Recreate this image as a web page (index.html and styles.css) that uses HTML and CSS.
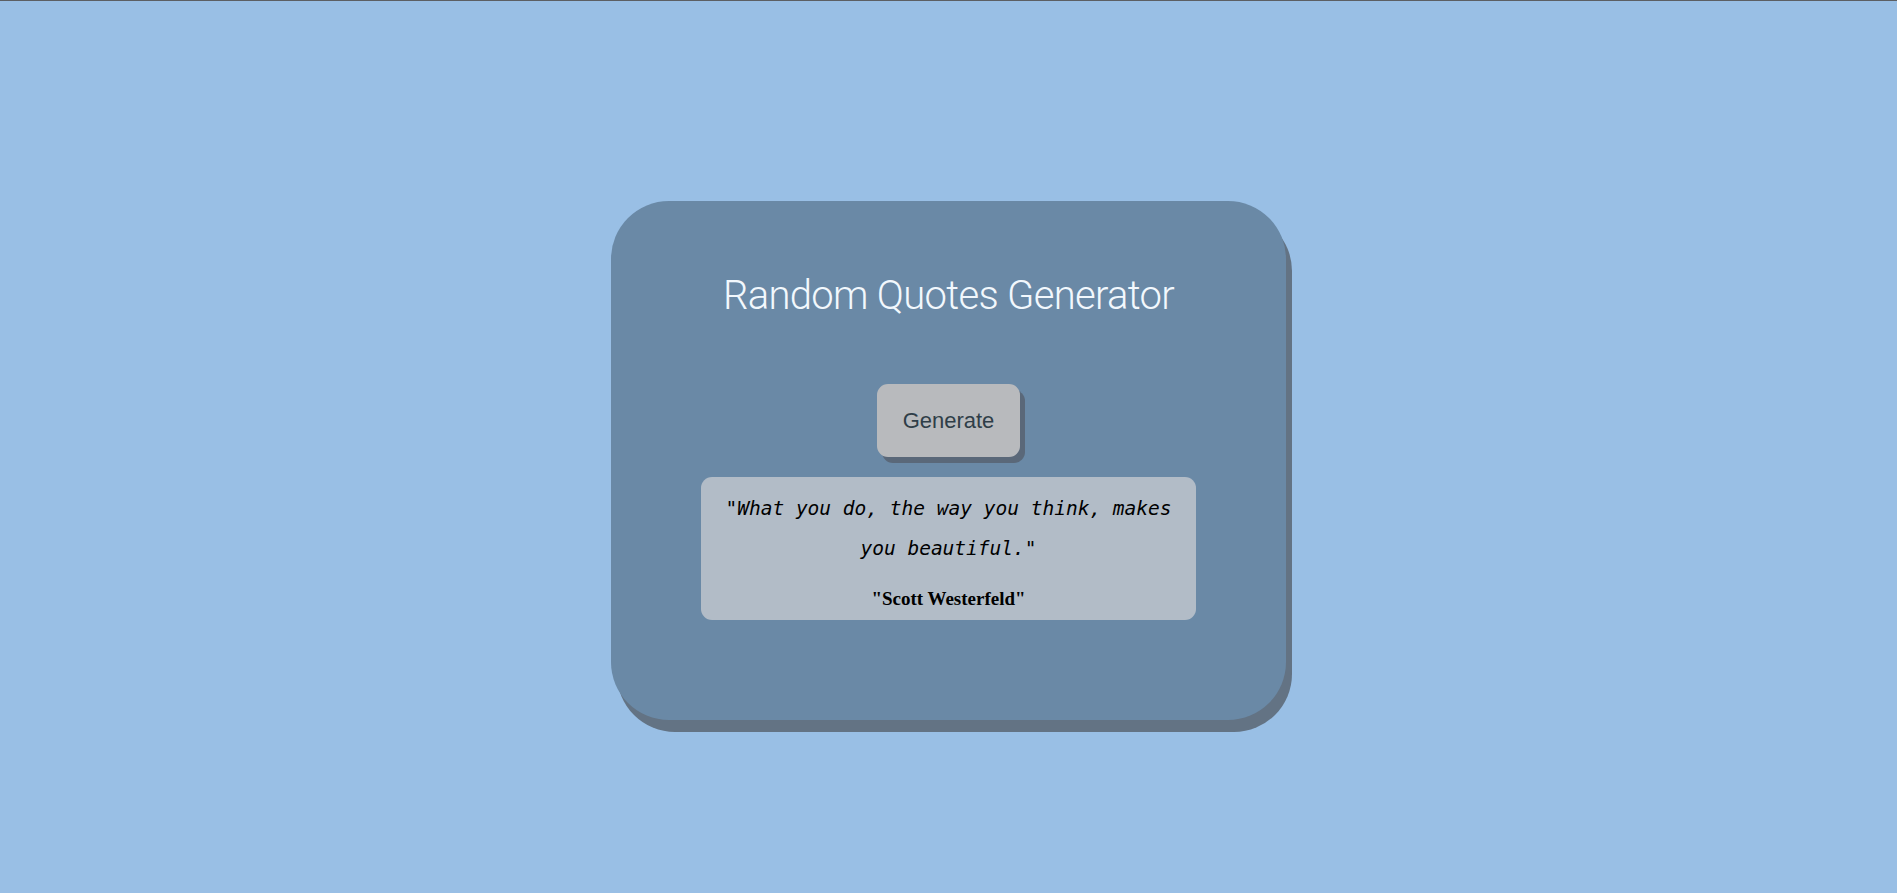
FILE: index.html
```html
<!DOCTYPE html>
<html lang="en">
<head>
<meta charset="utf-8">
<title>Random Quotes Generator</title>
<link rel="stylesheet" href="styles.css">
</head>
<body>
<main class="page">
  <section class="card">
    <h1 class="title">Random Quotes Generator</h1>
    <button class="generate" type="button">Generate</button>
    <div class="quote-box">
      <p class="quote-text">"What you do, the way you think, makes you beautiful."</p>
      <p class="quote-author">"Scott Westerfeld"</p>
    </div>
  </section>
</main>
</body>
</html>
```

FILE: styles.css
```css
html, body {
  margin: 0;
  padding: 0;
}
body {
  background: #99bfe5;
  border-top: 1px solid #5c5f63;
  min-height: 892px;
  box-sizing: border-box;
}
.page {
  display: flex;
  justify-content: center;
  padding-top: 200px;
}
.card {
  width: 675px;
  height: 519px;
  box-sizing: border-box;
  background: #6a89a6;
  border-radius: 58px;
  box-shadow: 6px 12px 0 #637384;
  display: flex;
  flex-direction: column;
  align-items: center;
  padding-top: 71px;
}
.title {
  margin: 0;
  font-family: Roboto, "Noto Sans", sans-serif;
  font-weight: 300;
  font-size: 40px;
  letter-spacing: -0.7px;
  line-height: 48px;
  color: #f2f8fd;
}
.generate {
  margin-top: 64px;
  width: 143px;
  height: 73px;
  border: none;
  border-radius: 11px;
  background: #b8babd;
  box-shadow: 5px 6px 0 #5a6879;
  font-family: "Liberation Sans", Arial, sans-serif;
  font-size: 22px;
  color: #2f3e48;
  padding: 0;
}
.quote-box {
  margin-top: 20px;
  width: 495px;
  height: 143px;
  box-sizing: border-box;
  background: #b2bcc7;
  border-radius: 11px;
  padding: 12px 20px 0;
  text-align: center;
}
.quote-text {
  margin: 0;
  font-family: "DejaVu Sans Mono", "Liberation Mono", monospace;
  font-style: italic;
  font-size: 19.5px;
  line-height: 40px;
  color: #000;
}
.quote-author {
  margin: 19px 0 0;
  font-family: "Liberation Serif", "Times New Roman", serif;
  font-weight: bold;
  font-size: 19px;
  color: #000;
}
```
